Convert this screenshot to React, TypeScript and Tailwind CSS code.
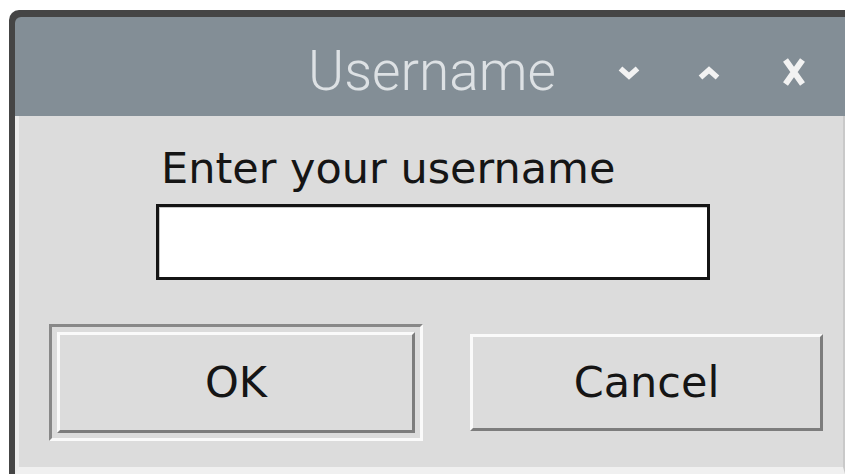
import React from "react";

function ChevronDown() {
  return (
    <svg width="22" height="16" viewBox="0 0 22 16" className="block">
      <polyline points="2.5,3.5 11,11 19.5,3.5" fill="none" stroke="#f2f2f2" strokeWidth="5.5" strokeLinecap="butt" strokeLinejoin="miter" />
    </svg>
  );
}

function ChevronUp() {
  return (
    <svg width="22" height="16" viewBox="0 0 22 16" className="block">
      <polyline points="2.5,12.5 11,5 19.5,12.5" fill="none" stroke="#f2f2f2" strokeWidth="5.5" strokeLinecap="butt" strokeLinejoin="miter" />
    </svg>
  );
}

function CloseGlyph() {
  return (
    <svg width="24" height="28" viewBox="0 0 24 28" className="block">
      <path d="M3.5 2 L20.5 26 M20.5 2 L3.5 26" fill="none" stroke="#f2f2f2" strokeWidth="6" strokeLinecap="butt" />
    </svg>
  );
}

function RaisedButton({ label }: { label: string }) {
  return (
    <div className="flex h-full w-full items-center justify-center border-[3px] border-t-[#fafafa] border-l-[#fafafa] border-b-[#7d7d7d] border-r-[#7d7d7d] bg-[#dcdcdc] text-[43px] leading-none text-[#151515]">
      {label}
    </div>
  );
}

export default function App() {
  return (
    <div className="h-[474px] w-[845px] overflow-hidden bg-white pl-[9px] pt-[10px]">
      <div className="flex h-[464px] w-[836px] flex-col rounded-tl-[10px] bg-[#454545] pl-[6px] pt-[7px]">
        <div className="flex flex-1 flex-col overflow-hidden rounded-tl-[6px]">
          {/* title bar */}
          <div className="grid h-[99px] grid-cols-[1fr_auto_1fr] items-center bg-[#838e96] pt-[10px]">
            <div />
            <div
              className="pl-[4px] text-[55px] font-light leading-none text-[#dde1e4]"
              style={{ fontFamily: "Roboto, 'Liberation Sans', sans-serif" }}
            >
              Username
            </div>
            <div className="flex items-center justify-end pr-[39px]">
              <div className="mt-[2px]"><ChevronDown /></div>
              <div className="ml-[58px] mt-[2px]"><ChevronUp /></div>
              <div className="ml-[62px]"><CloseGlyph /></div>
            </div>
          </div>

          {/* dialog body */}
          <div
            className="flex flex-1 flex-col border-b-[7px] border-l-[4px] border-r-[2px] border-b-[#f0f0f0] border-l-[#ececec] border-r-[#c9c9c9] bg-[#dcdcdc] pt-[31px]"
            style={{ fontFamily: "'DejaVu Sans', 'Liberation Sans', sans-serif" }}
          >
            <div className="ml-[142px] text-[43px] leading-[43px] text-[#151515]">Enter your username</div>
            <div className="ml-[137px] mt-[14px] h-[76px] w-[554px] border-[3px] border-[#141414] bg-white shadow-[inset_1px_1px_0_#c8c8c8]" />

            <div className="ml-[30px] mt-[44px] flex items-center">
              <div className="flex h-[117px] w-[374px] border-[3px] border-t-[#888888] border-l-[#888888] border-b-[#fafafa] border-r-[#fafafa] p-[5px]">
                <RaisedButton label="OK" />
              </div>
              <div className="ml-[47px] h-[97px] w-[353px]">
                <RaisedButton label="Cancel" />
              </div>
            </div>
          </div>
        </div>
      </div>
    </div>
  );
}
